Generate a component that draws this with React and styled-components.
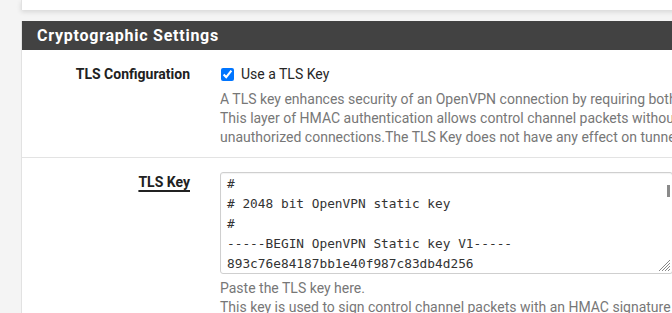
import React from "react";
import styled, { createGlobalStyle } from "styled-components";

const Global = createGlobalStyle`
  html, body { margin: 0; padding: 0; background: #f4f4f4; overflow: hidden; }
  body { font-family: Roboto, "Noto Sans", Arial, sans-serif; font-size: 14px; color: #212121; }
`;

const Page = styled.div`
  width: 1100px;
  padding-left: 21px;
  display: flex;
  flex-direction: column;
  gap: 11px;
`;

const TopPanel = styled.div`
  height: 10px;
  background: #fff;
  border-left: 1px solid #e2e2e2;
  box-shadow: 0 2px 5px rgba(0, 0, 0, 0.12);
`;

const Panel = styled.section`
  background: #fff;
  border-left: 1px solid #e2e2e2;
`;

const Heading = styled.h2`
  margin: 0;
  height: 29px;
  background: #424242;
  color: #fff;
  font-size: 16px;
  font-weight: 700;
  line-height: 29px;
  padding-left: 15px;
  letter-spacing: 0.75px;
`;

const Row = styled.div`
  display: flex;
  padding: 14px 0 10px;
  border-top: ${(p) => (p.$divided ? "1px solid #e3e3e3" : "none")};
`;

const Label = styled.div`
  width: 168px;
  flex: none;
  padding-right: 15px;
  text-align: right;
  font-weight: 700;
  line-height: 20px;
`;

const LabelText = styled.span`
  text-decoration: ${(p) => (p.$underline ? "underline" : "none")};
  text-decoration-thickness: 1.5px;
  text-underline-offset: 3px;
`;

const Control = styled.div`
  padding-left: 15px;
  flex: 1;
  min-width: 0;
`;

const CheckLine = styled.label`
  display: flex;
  align-items: center;
  height: 20px;
  gap: 7px;
  color: #262626;
`;

const Check = styled.input`
  width: 13px;
  height: 13px;
  margin: 0 0 0 1px;
`;

const Help = styled.div`
  color: #777;
  line-height: 19px;
  margin-top: ${(p) => p.$top || 6}px;
  white-space: nowrap;
`;

const KeyBox = styled.div`
  position: relative;
  box-sizing: content-box;
  width: 439px;
  height: 99px;
  padding: 1px 6px 0;
  border: 1px solid #cfcfcf;
  border-radius: 3px;
  box-shadow: inset 0 1px 1px rgba(0, 0, 0, 0.05);
  overflow: hidden;
  font-family: "DejaVu Sans Mono", "Liberation Mono", monospace;
  font-size: 12.8px;
  line-height: 20px;
  color: #333;
  white-space: pre;
`;

const Thumb = styled.div`
  position: absolute;
  right: 2px;
  top: 12px;
  width: 3px;
  height: 12px;
  background: #8a8a8a;
`;

const Grip = styled.svg`
  position: absolute;
  right: 1px;
  bottom: 1px;
`;

const keyLines = [
  "#",
  "# 2048 bit OpenVPN static key",
  "#",
  "-----BEGIN OpenVPN Static key V1-----",
  "893c76e84187bb1e40f987c83db4d256",
];

export default function App() {
  return (
    <>
      <Global />
      <Page>
        <TopPanel />
        <Panel>
          <Heading>Cryptographic Settings</Heading>
          <Row>
            <Label>
              <LabelText>TLS Configuration</LabelText>
            </Label>
            <Control>
              <CheckLine>
                <Check type="checkbox" defaultChecked />
                Use a TLS Key
              </CheckLine>
              <Help>
                A TLS key enhances security of an OpenVPN connection by requiring both parties to have a common key before a peer can perform a TLS handshake.
                <br />
                This layer of HMAC authentication allows control channel packets without the proper signature to be dropped, protecting the peers from attack or
                <br />
                unauthorized connections.The TLS Key does not have any effect on tunnel data.
              </Help>
            </Control>
          </Row>
          <Row $divided>
            <Label>
              <LabelText $underline>TLS Key</LabelText>
            </Label>
            <Control>
              <KeyBox>
                {keyLines.join("\n")}
                <Thumb />
                <Grip width="13" height="13" viewBox="0 0 13 13">
                  <path d="M12 1 L1 12 M12 4 L4 12 M12 7 L7 12 M12 10 L10 12" stroke="#888" strokeWidth="1" />
                </Grip>
              </KeyBox>
              <Help $top={5}>
                Paste the TLS key here.
                <br />
                This key is used to sign control channel packets with an HMAC signature for authentication when establishing the tunnel.
              </Help>
            </Control>
          </Row>
        </Panel>
      </Page>
    </>
  );
}
